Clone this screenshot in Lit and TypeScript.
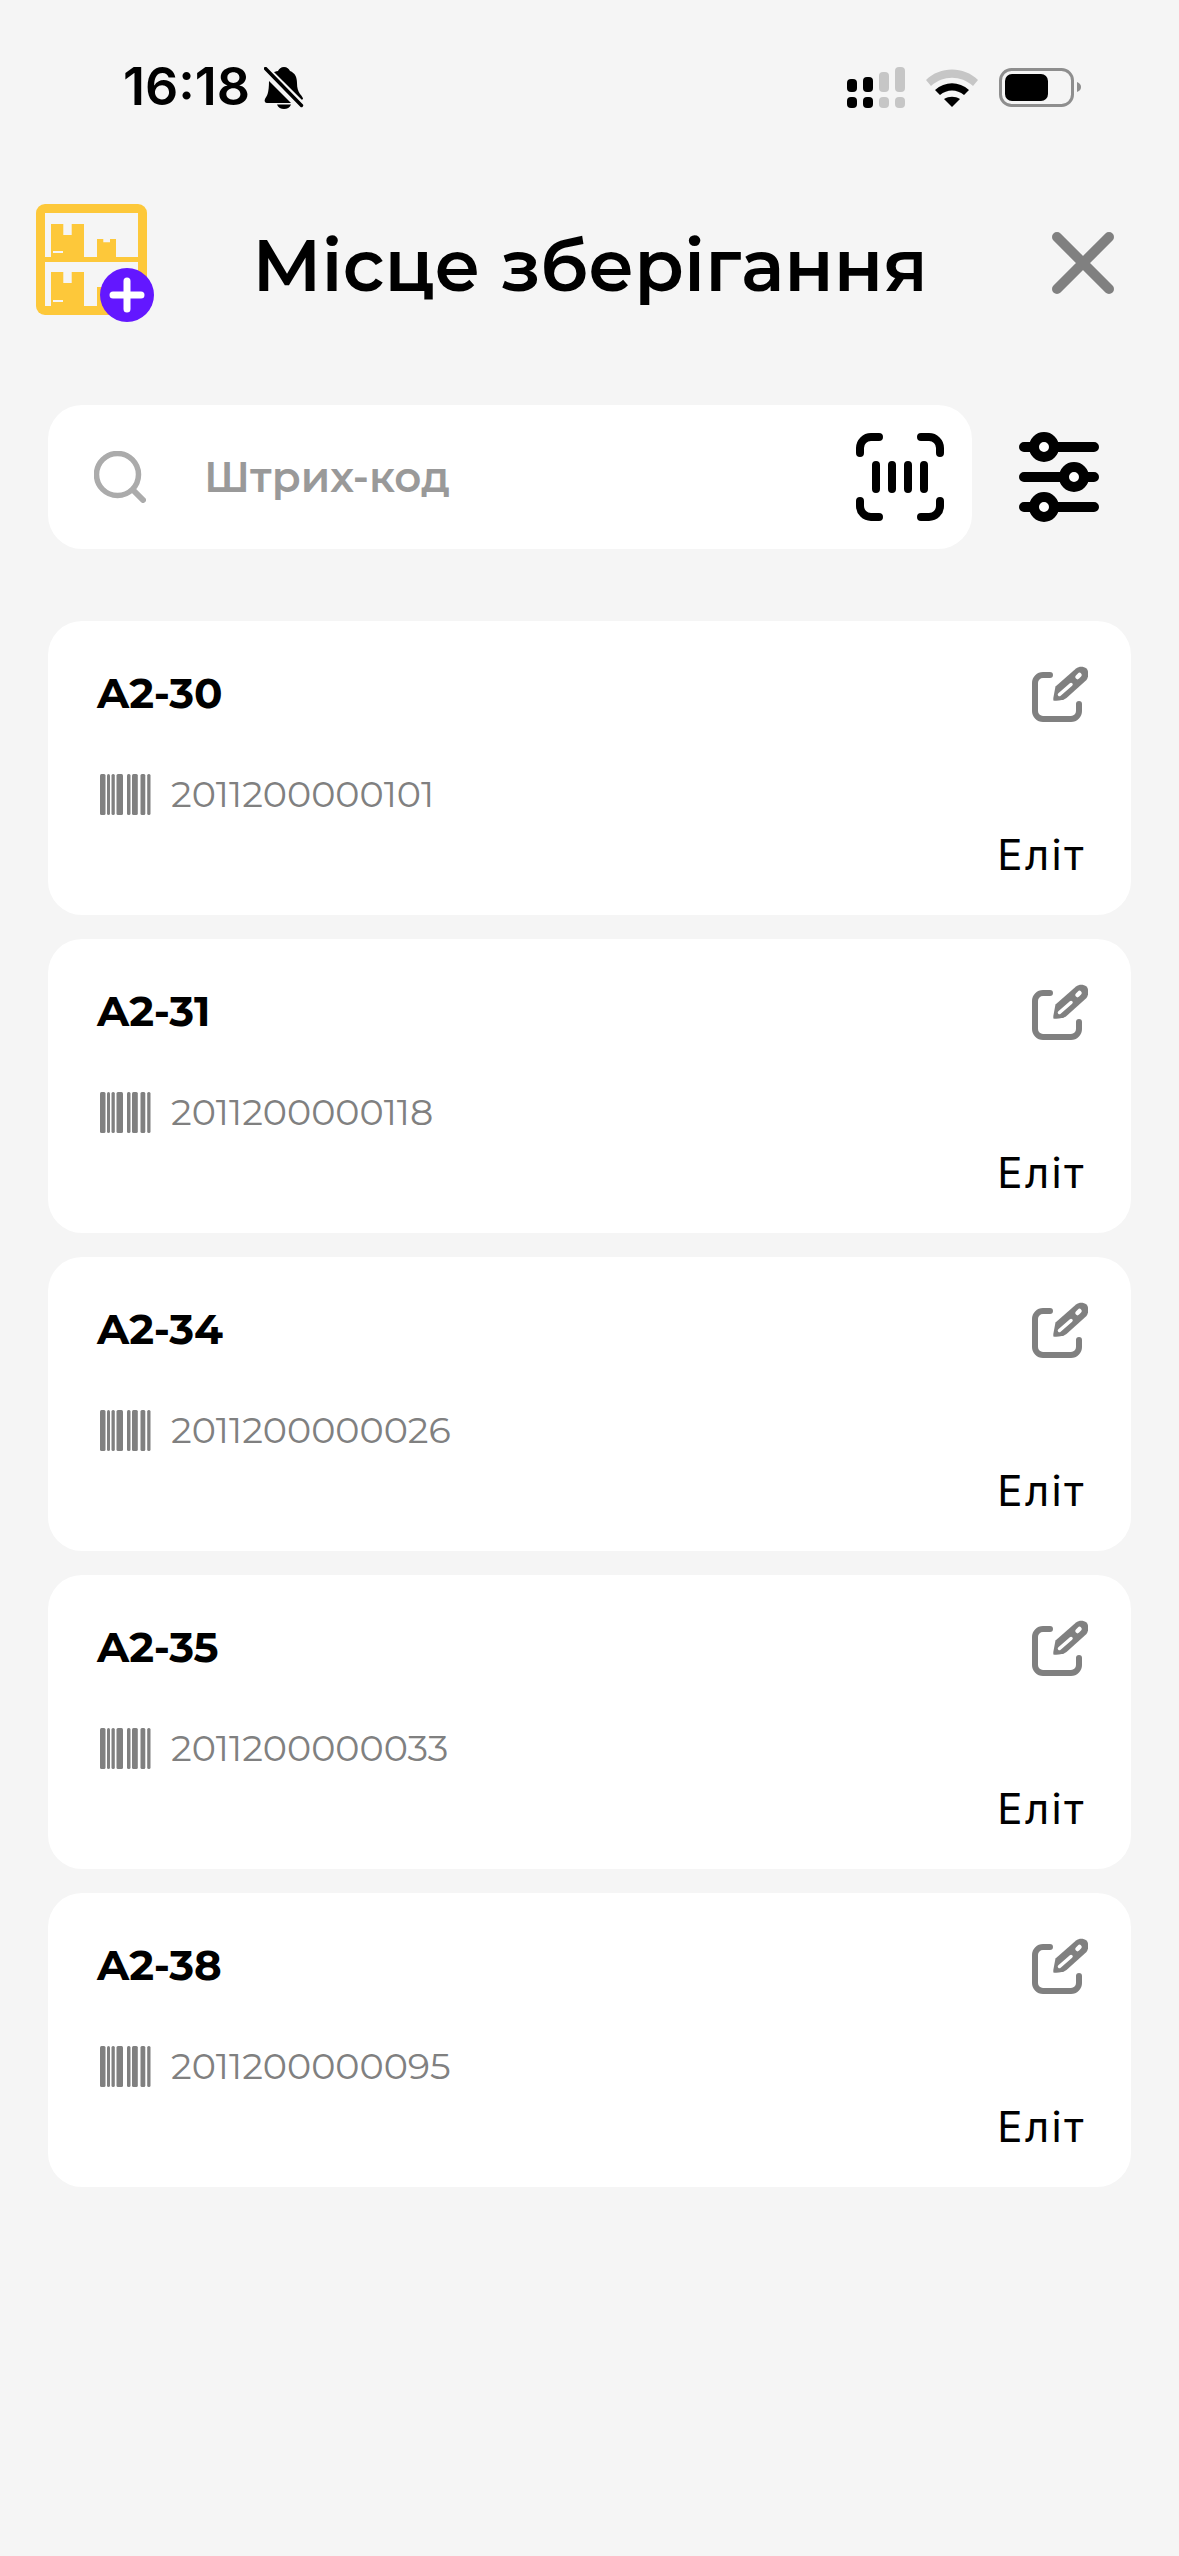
import { LitElement, html, css, svg } from "lit";
import { customElement } from "lit/decorators.js";

const items = [
  ["A2-30", "2011200000101"],
  ["A2-31", "2011200000118"],
  ["A2-34", "2011200000026"],
  ["A2-35", "2011200000033"],
  ["A2-38", "2011200000095"],
];

const bars = [[0,5.5],[7,3],[11.5,3.3],[16.5,6.5],[27,3.5],[32,5.8],[40.500,4.8],[47.200,3.3]];

@customElement("app-root")
export class AppRoot extends LitElement {
  static styles = css`
    :host { display: block; width: 1179px; height: 2556px; background: #f5f5f5; font-family: Montserrat, Inter, "Noto Sans", sans-serif; overflow: hidden; }
    svg { display: block; flex: none; }
    .status { padding: 62px 0 0 123px; box-sizing: border-box; height: 130px; display: flex; align-items: flex-start; }
    .time { font-family: Inter, sans-serif; font-size: 52px; font-weight: 600; line-height: 50px; color: #000; width: 141px; white-space: nowrap; }
    .bell { margin-top: 5px; }
    .sr { margin-left: auto; margin-right: 98px; display: flex; align-items: flex-start; gap: 21px; margin-top: 5px; }
    .wifi { margin-top: 2px; }
    .battery { margin-top: 1px; }
    .head { display: flex; align-items: center; height: 118px; margin-top: 74px; padding-left: 36px; }
    .logo { overflow: visible; }
    .title { flex: none; box-sizing: border-box; width: 894px; padding-right: 30px; padding-top: 4px; text-align: center; font-size: 72px; font-weight: 600; color: #000; white-space: nowrap; }
    .search-row { display: flex; align-items: center; margin: 83px 0 0 48px; }
    .search { width: 924px; height: 144px; background: #fff; border-radius: 34px; display: flex; align-items: center; padding: 0 27px 0 46px; box-sizing: border-box; }
    .ph { font-size: 42px; font-weight: 600; color: #999; margin-left: 58px; flex: 1; }
    .filter { margin-left: 47px; }
    .list { margin: 72px 0 0 48px; width: 1083px; display: flex; flex-direction: column; gap: 24px; }
    .card { background: #fff; border-radius: 34px; height: 294px; box-sizing: border-box; padding: 44px 43px 0 49px; }
    .top { display: flex; justify-content: space-between; height: 56px; }
    .name { font-size: 42px; font-weight: 700; color: #000; line-height: 56px; }
    .code { display: flex; align-items: center; gap: 20px; margin: 51px 0 0 3px; height: 44px; font-size: 36.500px; color: #808080; font-weight: 400; }
    .place { font-family: Inter, "Noto Sans", sans-serif; text-align: right; font-size: 42px; letter-spacing: 2.400px; color: #000; line-height: 50px; margin: 14px 2px 0 0; font-weight: 400; }
  `;

  render() {
    return html`
      <div class="status">
        <div class="time">16:18</div>
        <svg class="bell" width="40" height="42" viewBox="0 0 40 42">
          <path d="M20 0c3 0 5 2 6 4 5 2 7 6 7 12 0 5 1 8 3 11 2 2 3 4 3 5l-3 2L8 6c2-1 4-2 6-2 1-2 3-4 6-4z" fill="#000"/>
          <path d="M5 14l22 22H3c-2 0-3-2-2-4 2-3 4-6 4-18z" fill="#000"/>
          <path d="M13 37.500h14c-1 3-4 4.500-7 4.500s-6-1.500-7-4.500z" fill="#000"/>
          <path d="M-1 -1l42 42" stroke="#f5f5f5" stroke-width="7"/>
          <path d="M1.500 1.500l36 37" stroke="#000" stroke-width="3.400" stroke-linecap="round"/>
        </svg>
        <div class="sr">
          <svg width="58" height="41" viewBox="0 0 58 41">
            <rect x="0" y="12" width="10" height="13" rx="4" fill="#000"/><rect x="16" y="10" width="10" height="15" rx="4" fill="#000"/>
            <rect x="32" y="5" width="10" height="20" rx="4" fill="#c6c6c6"/><rect x="48" y="0" width="10" height="25" rx="4" fill="#c6c6c6"/>
            <rect x="0" y="30" width="10" height="11" rx="4" fill="#000"/><rect x="16" y="30" width="10" height="11" rx="4" fill="#000"/>
            <rect x="32" y="30" width="10" height="11" rx="4" fill="#c6c6c6"/><rect x="48" y="30" width="10" height="11" rx="4" fill="#c6c6c6"/>
          </svg>
          <svg class="wifi" width="52" height="38" viewBox="0 0 52 38">
            <path d="M0 11C14-3 38-3 52 11l-5 6C35 6 17 6 5 17z" fill="#c6c6c6"/>
            <path d="M9 21c10-9 24-9 34 0l-5 5c-7-6-17-6-24 0z" fill="#000"/>
            <path d="M18 30c5-3 11-3 16 0l-8 8z" fill="#000"/>
          </svg>
          <svg class="battery" width="82" height="39" viewBox="0 0 82 39">
            <rect x="1.500" y="1.500" width="72" height="36" rx="11" fill="none" stroke="#8e8e8e" stroke-width="3"/>
            <rect x="6" y="6" width="43" height="27" rx="7" fill="#000"/>
            <path d="M78 14c3 1 4 3 4 5s-1 4-4 5z" fill="#8e8e8e"/>
          </svg>
        </div>
      </div>

      <div class="head">
        <svg class="logo" width="122" height="118" viewBox="0 0 122 118">
          <rect width="111" height="111" rx="9" fill="#fdc83a"/>
          <rect x="9" y="9" width="93" height="44" fill="#f5f5f5"/>
          <rect x="9" y="58" width="93" height="44" fill="#f5f5f5"/>
          <path d="M15 20h12.300v11h8.400V20H48v33H15z" fill="#fdc83a"/>
          <rect x="17" y="47" width="10" height="2" fill="#f5f5f5"/>
          <path d="M61 35h6.300v3.300H74V35h6v18H61z" fill="#fdc83a"/>
          <path d="M15 68h12.300v11h8.400V68H48v34H15z" fill="#fdc83a"/>
          <rect x="17" y="96" width="10" height="2" fill="#f5f5f5"/>
          <path d="M61 83h19v19H61z" fill="#fdc83a"/>
          <circle cx="91" cy="91" r="27" fill="#6317ff"/>
          <path d="M91 77v28M77 91h28" stroke="#fff" stroke-width="7" stroke-linecap="round"/>
        </svg>
        <div class="title">Місце зберігання</div>
        <svg width="62" height="62" viewBox="0 0 62 62"><path d="M5 5l52 52M57 5L5 57" stroke="#808080" stroke-width="10" stroke-linecap="round"/></svg>
      </div>

      <div class="search-row">
        <div class="search">
          <svg width="52" height="52" viewBox="0 0 52 52"><circle cx="23.500" cy="23.500" r="21" fill="none" stroke="#ababab" stroke-width="5.500"/><path d="M39 39l10 10" stroke="#ababab" stroke-width="6" stroke-linecap="round"/></svg>
          <div class="ph">Штрих-код</div>
          <svg width="90" height="90" viewBox="0 0 90 90" fill="none" stroke="#000" stroke-width="8" stroke-linecap="round">
            <path d="M5 21v-5a11 11 0 0 1 11-11h8M66 5h8a11 11 0 0 1 11 11v5M5 69v5a11 11 0 0 0 11 11h8M66 85h8a11 11 0 0 0 11-11v-5"/>
            <path d="M21 33v24M37 33v24M53 33v24M69 33v24"/>
          </svg>
        </div>
        <svg class="filter" width="80" height="90" viewBox="0 0 80 90" fill="none">
          <path d="M5 15h70M5 45h70M5 75h70" stroke="#000" stroke-width="10" stroke-linecap="round"/>
          <circle cx="25" cy="15" r="10" fill="#fff" stroke="#000" stroke-width="10"/>
          <circle cx="55" cy="45" r="10" fill="#fff" stroke="#000" stroke-width="10"/>
          <circle cx="25" cy="75" r="10" fill="#fff" stroke="#000" stroke-width="10"/>
        </svg>
      </div>

      <div class="list">
        ${items.map(([n, c]) => html`
          <div class="card">
            <div class="top">
              <div class="name">${n}</div>
              <svg width="56" height="58" viewBox="0 0 56 58">
                <path d="M18 10H11a8 8 0 0 0-8 8v28a8 8 0 0 0 8 8h28a8 8 0 0 0 8-8v-7" fill="none" stroke="#808080" stroke-width="6" stroke-linecap="round"/>
                <path d="M21.300 33l2.200-11.500L44 3.500c3-2.500 7.500-2.500 10.500 0 2.500 3 2.500 7.500 0 11.500L34.500 33c-3 2.500-9.500 3-13.200 2.500z" fill="#808080"/>
                <path d="M27.500 29.500L39 19.500" stroke="#fff" stroke-width="3.500" stroke-linecap="round"/>
                <path d="M45.500 12l2-2" stroke="#fff" stroke-width="4.500" stroke-linecap="round"/>
              </svg>
            </div>
            <div class="code">
              <svg width="51" height="41" viewBox="0 0 51 41">
                ${bars.map(([x, w]) => svg`<rect x="${x}" y="0" width="${w}" height="41" rx="1.500" fill="#808080"/>`)}
              </svg>
              <span>${c}</span>
            </div>
            <div class="place">Еліт</div>
          </div>`)}
      </div>
    `;
  }
}
